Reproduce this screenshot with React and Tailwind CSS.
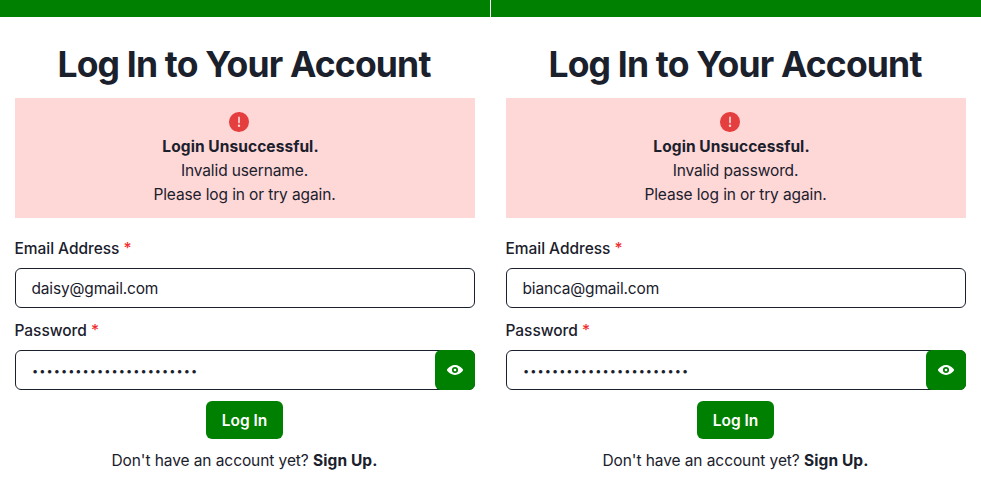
function WarningIcon() {
  return (
    <svg className="mr-[12px] mb-[3px] h-5 w-5 shrink-0" viewBox="0 0 24 24" fill="#e53e3e">
      <path d="M11.983 0a12.206 12.206 0 0 0-8.51 3.653A11.8 11.8 0 0 0 0 12.207 11.779 11.779 0 0 0 11.8 24h.214A12.111 12.111 0 0 0 24 11.791 11.766 11.766 0 0 0 11.983 0Zm-1.483 16.542a1.476 1.476 0 0 1 1.449-1.53h.027a1.527 1.527 0 0 1 1.523 1.47 1.475 1.475 0 0 1-1.449 1.53h-.027a1.529 1.529 0 0 1-1.523-1.47ZM11 12.5v-6a1 1 0 0 1 2 0v6a1 1 0 1 1-2 0Z" />
    </svg>
  );
}

function ViewIcon() {
  return (
    <svg className="h-4 w-4" viewBox="0 0 24 24" fill="currentColor">
      <path d="M23.432 10.524C20.787 7.614 16.4 4.538 12 4.6 7.6 4.537 3.213 7.615.568 10.524a2.211 2.211 0 0 0 0 2.948C3.182 16.351 7.507 19.4 11.923 19.4h.149c4.422 0 8.747-3.049 11.363-5.929a2.21 2.21 0 0 0-.003-2.947ZM7.4 12A4.6 4.6 0 1 1 12 16.6 4.6 4.6 0 0 1 7.4 12Z" />
      <circle cx="12" cy="12" r="2" />
    </svg>
  );
}

function FieldLabel({ children }) {
  return (
    <label className="-ml-[0.5px] h-6 text-[15.5px] leading-[26px] font-medium tracking-[-0.04px]">
      {children} <span className="text-[#f03030]">*</span>
    </label>
  );
}

function Panel({ reason, email }) {
  return (
    <section className="h-[488px] w-[490px] bg-white text-[#1a202c]">
      <div className="h-[17px] bg-[#008000]" />
      <div className="flex flex-col px-[15px]">
        <h1 className="mt-[26px] mr-[2px] h-[43px] text-center text-[35.5px] leading-[43px] font-bold tracking-[-0.82px] whitespace-nowrap">Log In to Your Account</h1>
        <div className="mt-3 flex h-[120px] flex-col items-center bg-[#fed7d7] pt-[14px] text-[15.5px] leading-6 tracking-[-0.12px]">
          <WarningIcon />
          <p className="mr-[9px] font-bold tracking-[0.07px]">Login Unsuccessful.</p>
          <p className="mr-px">{reason}</p>
          <p className="mr-px">Please log in or try again.</p>
        </div>
        <div className="mt-[18px] flex flex-col">
          <FieldLabel>Email Address</FieldLabel>
          <div className="mt-2 flex h-10 items-center rounded-md border border-[#1a202c] pt-[2px] pr-4 pl-[15.5px] text-[15.5px] tracking-[-0.17px]">{email}</div>
        </div>
        <div className="mt-[10px] flex flex-col">
          <FieldLabel>Password</FieldLabel>
          <div className="mt-2 flex h-10 items-center justify-between rounded-md border border-[#1a202c] pl-4">
            <span className="pt-[2px] text-[11px] tracking-[1.04px]">•••••••••••••••••••••••</span>
            <div className="-mr-px flex h-10 w-10 items-center justify-center rounded-md bg-[#008000] text-white">
              <ViewIcon />
            </div>
          </div>
        </div>
        <button className="mt-[11px] ml-[191px] h-[38px] w-[77px] rounded-md bg-[#008000] pt-[2px] text-[15.5px] font-semibold text-white">Log In</button>
        <p className="mt-[10px] mr-px text-center text-[15.5px] leading-6 tracking-[-0.08px]">Don't have an account yet? <b className="tracking-[0.1px]">Sign Up.</b></p>
      </div>
    </section>
  );
}

export default function App() {
  return (
    <main className="flex h-[488px] w-[981px] gap-px bg-white font-['Inter',sans-serif]">
      <Panel reason="Invalid username." email="daisy@gmail.com" />
      <Panel reason="Invalid password." email="bianca@gmail.com" />
    </main>
  );
}
